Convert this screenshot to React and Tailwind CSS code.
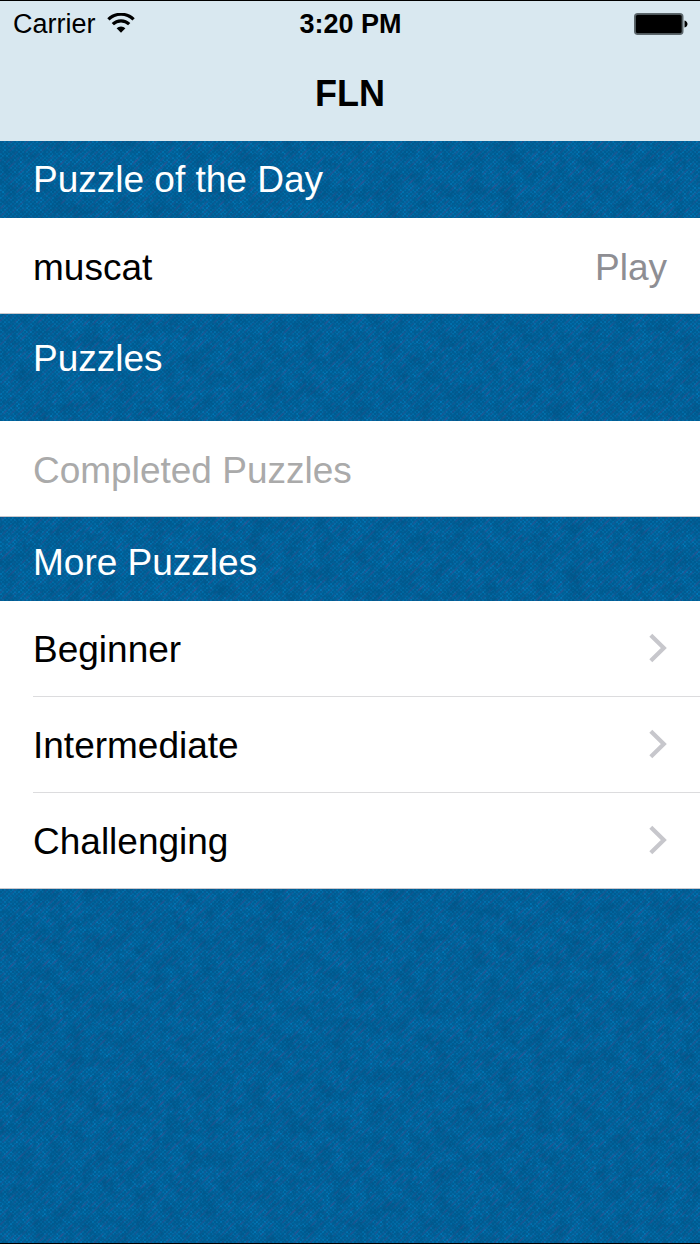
const levels = ["Beginner", "Intermediate", "Challenging"];

// woven denim: light stitches, violet twill threads and soft dark patches, each broken up by noise
function Denim() {
  return (
    <svg className="absolute inset-0 -z-10 h-full w-full" aria-hidden="true">
      <defs>
        <pattern id="stitch" width="4" height="4" patternUnits="userSpaceOnUse">
          <path d="M0 0h2v2h-2z M2 2h2v2h-2z" fill="#007cbe" />
        </pattern>
        <pattern id="twill" width="8" height="8" patternUnits="userSpaceOnUse">
          <path d="M-2 10 L10 -2 M-2 2 L2 -2 M6 10 L10 6" stroke="#2f5596" strokeWidth="1.5" />
        </pattern>
        <filter id="stitch-noise" x="0" y="0" width="100%" height="100%" colorInterpolationFilters="sRGB">
          <feTurbulence type="fractalNoise" baseFrequency="0.3" numOctaves="2" seed="4" />
          <feColorMatrix values="0 0 0 0 0  0 0 0 0 0  0 0 0 0 0  1.6 0 0 0 -0.4" result="noise" />
          <feComposite in="SourceGraphic" in2="noise" operator="in" />
        </filter>
        <filter id="twill-noise" x="0" y="0" width="100%" height="100%" colorInterpolationFilters="sRGB">
          <feTurbulence type="fractalNoise" baseFrequency="0.12" numOctaves="2" seed="9" />
          <feColorMatrix values="0 0 0 0 0  0 0 0 0 0  0 0 0 0 0  0 2 0 0 -0.7" result="noise" />
          <feComposite in="SourceGraphic" in2="noise" operator="in" />
        </filter>
        <filter id="patch-noise" x="0" y="0" width="100%" height="100%" colorInterpolationFilters="sRGB">
          <feTurbulence type="fractalNoise" baseFrequency="0.06" numOctaves="4" seed="2" />
          <feColorMatrix values="0 0 0 0 0  0 0 0 0 0.28  0 0 0 0 0.46  0 0 0.7 0 -0.22" />
        </filter>
      </defs>
      <rect width="100%" height="100%" fill="#005f96" />
      <rect width="100%" height="100%" fill="url(#stitch)" filter="url(#stitch-noise)" />
      <rect width="100%" height="100%" fill="url(#twill)" filter="url(#twill-noise)" />
      <rect width="100%" height="100%" filter="url(#patch-noise)" />
    </svg>
  );
}

function WifiIcon() {
  return (
    <svg className="mb-0.5 h-5 w-7" viewBox="0 0 28 20" fill="none" aria-hidden="true">
      <path d="M1.4 6.4 A18 18 0 0 1 26.6 6.4" stroke="#000" strokeWidth="3.2" />
      <path d="M5.8 11.2 A11.7 11.7 0 0 1 22.2 11.2" stroke="#000" strokeWidth="3.2" />
      <path d="M9.6 15.2 A6.3 6.3 0 0 1 18.4 15.2 L14 19.8 Z" fill="#000" />
    </svg>
  );
}

function BatteryIcon() {
  return (
    <svg className="h-[22px] w-[54px]" viewBox="0 0 54 22" aria-hidden="true">
      <rect x="0.75" y="0.75" width="48" height="20.5" rx="3" fill="#40484c" stroke="#5c666b" strokeWidth="1.5" />
      <rect x="2" y="2" width="45.5" height="18" rx="1.5" fill="#000" />
      <path d="M50.5 7.5 C54.5 8.5 54.5 13.5 50.5 14.5 Z" fill="#000" />
    </svg>
  );
}

function Chevron() {
  return (
    <svg className="mb-1 h-[30px] w-[18px] shrink-0" viewBox="0 0 18 30" fill="none" aria-hidden="true">
      <path d="M1.8 2.3 L14.8 15 L1.8 27.7" stroke="#c7c7cc" strokeWidth="4.2" />
    </svg>
  );
}

function SectionTitle({ className, children }) {
  return <h2 className={`px-[33px] text-[37px] leading-[44px] text-white ${className}`}>{children}</h2>;
}

export default function App() {
  return (
    <div className='relative isolate flex min-h-screen flex-col border-y border-black font-["Liberation_Sans",Arial,sans-serif] text-black'>
      <Denim />

      <header className="bg-[#d9e8f0] pb-6">
        <div className="grid h-[46px] grid-cols-3 items-center pl-[13px] pr-3 text-[27px] leading-8">
          <div className="flex items-center gap-[11px]">
            <span>Carrier</span>
            <WifiIcon />
          </div>
          <time className="text-center text-[27px] font-bold">3:20 PM</time>
          <div className="flex justify-end">
            <BatteryIcon />
          </div>
        </div>
        <h1 className="pt-6 text-center text-[36px] font-bold leading-[46px]">FLN</h1>
      </header>

      <main>
        <section>
          <SectionTitle className="pb-4 pt-[17px]">Puzzle of the Day</SectionTitle>
          <button className="flex h-24 w-full items-center justify-between border-b border-[#c8c7cc] bg-white px-[33px] pt-1 text-[37px] leading-[44px]">
            <span>muscat</span>
            <span className="text-[#8e8e93]">Play</span>
          </button>
        </section>

        <section>
          <SectionTitle className="pb-10 pt-[23px]">Puzzles</SectionTitle>
          <button
            disabled
            className="flex h-24 w-full items-center border-b border-[#c8c7cc] bg-white px-[33px] pt-1 text-[37px] leading-[44px] text-[#aaaaaa]"
          >
            Completed Puzzles
          </button>
        </section>

        <section>
          <SectionTitle className="pb-4 pt-6">More Puzzles</SectionTitle>
          <ul className="border-b border-[#c8c7cc] bg-white pl-[33px]">
            {levels.map((level) => (
              <li key={level} className="border-b border-[#dcdcde] last:border-b-0">
                <button className="flex h-[95px] w-full items-center justify-between pr-[33px] pt-0.5 text-[37px] leading-[44px]">
                  <span>{level}</span>
                  <Chevron />
                </button>
              </li>
            ))}
          </ul>
        </section>
      </main>
    </div>
  );
}
